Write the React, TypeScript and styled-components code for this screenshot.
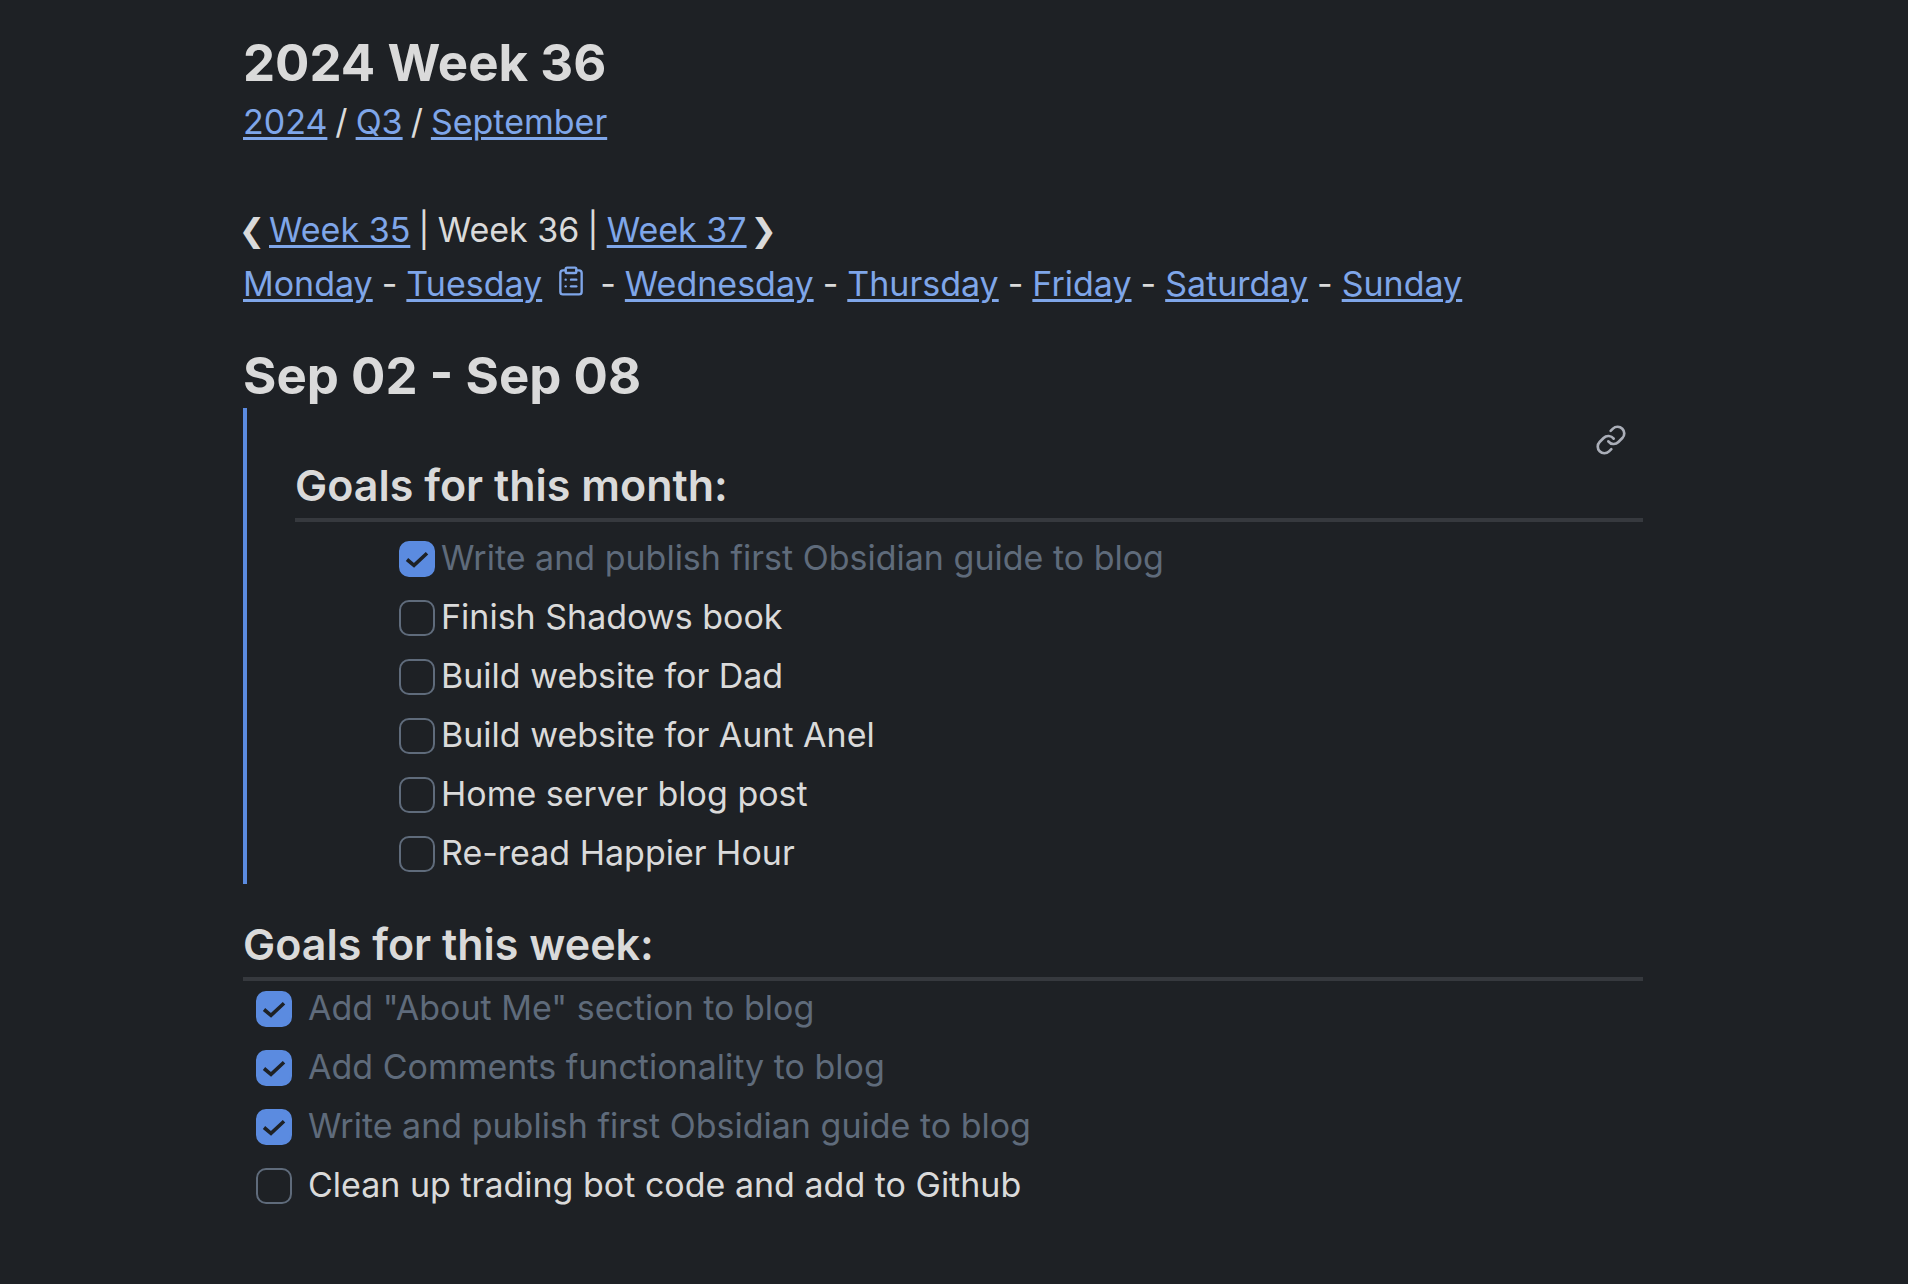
import { Fragment, useState } from "react";
import styled, { createGlobalStyle } from "styled-components";
import { ClipboardList, Link as LinkIcon } from "lucide-react";

const color = {
  page: "#1e2125",
  text: "#dadada",
  link: "#7fa6e9",
  accent: "#5b8be0",
  faint: "#5f6b7b",
  rule: "#36393e",
  icon: "#aaaeb8",
};

const GlobalStyle = createGlobalStyle`
  * { box-sizing: border-box; }
  body {
    margin: 0;
    background: ${color.page};
    color: ${color.text};
    font-family: Inter, "Liberation Sans", sans-serif;
    font-size: 34px;
    line-height: 54px;
  }
`;

const Note = styled.main`
  padding: 31px 265px 56px 243px;
`;

const Title = styled.h1`
  margin: 0;
  font-size: 51px;
  font-weight: 700;
  line-height: 64px;
`;

const RangeTitle = styled(Title)`
  margin-top: 33px;
`;

const Line = styled.nav<{ $gap: number }>`
  display: flex;
  flex-wrap: wrap;
  column-gap: ${(p) => p.$gap}px;
`;

const Breadcrumb = styled(Line)`
  margin-bottom: 54px;
`;

const NoteLink = styled.a`
  color: ${color.link};
  text-decoration: underline;
  text-decoration-thickness: 3px;
  text-underline-offset: 3px;
`;

const Arrow = styled.span`
  display: flex;
  align-items: center;
  justify-content: center;
  width: 18px;
  font-family: "DejaVu Sans", sans-serif;
  font-size: 32px;
  font-weight: 700;
  line-height: 1;
`;

const TaskMarker = styled.span`
  display: flex;
  align-self: center;
  margin: 0 4px;
  padding-bottom: 6px;
  color: ${color.link};
`;

const Embed = styled.section`
  position: relative;
  padding: 48px 0 4px 48px;
  border-left: 4px solid ${color.accent};
`;

const EmbedButton = styled.button`
  position: absolute;
  top: 16px;
  right: 16px;
  display: flex;
  padding: 0;
  border: 0;
  background: none;
  color: ${color.icon};
  cursor: pointer;
`;

const Section = styled.section`
  margin-top: 31px;
`;

const Heading = styled.h2`
  margin: 0;
  padding-bottom: 4px;
  border-bottom: 4px solid ${color.rule};
  font-size: 43px;
  font-weight: 600;
  line-height: 58px;
`;

const List = styled.ul<{ $embedded?: boolean }>`
  display: grid;
  gap: 5px;
  margin: 0;
  padding: ${(p) => (p.$embedded ? "9px 0 0 104px" : "0 0 0 13px")};
  list-style: none;
`;

const Item = styled.li<{ $embedded?: boolean }>`
  display: flex;
  align-items: center;
  gap: ${(p) => (p.$embedded ? "6px" : "16px")};
`;

const Box = styled.span`
  display: grid;
  place-items: center;
  margin-top: 2px;

  > * { grid-area: 1 / 1; }
`;

const Check = styled.input`
  appearance: none;
  width: 36px;
  height: 36px;
  margin: 0;
  border: 2px solid ${color.faint};
  border-radius: 10px;
  cursor: pointer;

  &:checked {
    border-color: ${color.accent};
    background: ${color.accent};
  }
`;

const Tick = styled.svg`
  pointer-events: none;
`;

const Label = styled.label<{ $done: boolean }>`
  color: ${(p) => (p.$done ? color.faint : color.text)};
`;

type Task = { text: string; done: boolean };

const monthTasks: Task[] = [
  { text: "Write and publish first Obsidian guide to blog", done: true },
  { text: "Finish Shadows book", done: false },
  { text: "Build website for Dad", done: false },
  { text: "Build website for Aunt Anel", done: false },
  { text: "Home server blog post", done: false },
  { text: "Re-read Happier Hour", done: false },
];

const weekTasks: Task[] = [
  { text: 'Add "About Me" section to blog', done: true },
  { text: "Add Comments functionality to blog", done: true },
  { text: "Write and publish first Obsidian guide to blog", done: true },
  { text: "Clean up trading bot code and add to Github", done: false },
];

const days = ["Monday", "Tuesday", "Wednesday", "Thursday", "Friday", "Saturday", "Sunday"];

function TaskList({ name, tasks, embedded }: { name: string; tasks: Task[]; embedded?: boolean }) {
  const [done, setDone] = useState(tasks.map((t) => t.done));
  const toggle = (i: number) => setDone(done.map((d, j) => (j === i ? !d : d)));
  return (
    <List $embedded={embedded}>
      {tasks.map((task, i) => (
        <Item key={task.text} $embedded={embedded}>
          <Box>
            <Check id={`${name}-${i}`} type="checkbox" checked={done[i]} onChange={() => toggle(i)} />
            {done[i] && (
              <Tick width="36" height="36" viewBox="0 0 36 36" fill="none" aria-hidden="true">
                <path d="M8 18.5 L15 24.3 L28 12.3" stroke={color.page} strokeWidth="3.6" />
              </Tick>
            )}
          </Box>
          <Label htmlFor={`${name}-${i}`} $done={done[i]}>
            {task.text}
          </Label>
        </Item>
      ))}
    </List>
  );
}

export default function App() {
  return (
    <>
      <GlobalStyle />
      <Note>
        <Title>2024 Week 36</Title>
        <Breadcrumb $gap={8} aria-label="Period">
          <NoteLink href="#2024">2024</NoteLink>
          <span>/</span>
          <NoteLink href="#q3">Q3</NoteLink>
          <span>/</span>
          <NoteLink href="#september">September</NoteLink>
        </Breadcrumb>
        <Line $gap={8} aria-label="Weeks">
          <Arrow>❮</Arrow>
          <NoteLink href="#week-35">Week 35</NoteLink>
          <span>|</span>
          <span>Week 36</span>
          <span>|</span>
          <NoteLink href="#week-37">Week 37</NoteLink>
          <Arrow>❯</Arrow>
        </Line>
        <Line $gap={9} aria-label="Days">
          {days.map((day, i) => (
            <Fragment key={day}>
              {i > 0 && <span>-</span>}
              <NoteLink href={`#${day.toLowerCase()}`}>{day}</NoteLink>
              {day === "Tuesday" && (
                <TaskMarker>
                  <ClipboardList size={32} strokeWidth={1.75} />
                </TaskMarker>
              )}
            </Fragment>
          ))}
        </Line>
        <RangeTitle>Sep 02 - Sep 08</RangeTitle>
        <Embed>
          <EmbedButton type="button" aria-label="Open link">
            <LinkIcon size={32} strokeWidth={2} />
          </EmbedButton>
          <Heading>Goals for this month:</Heading>
          <TaskList name="month" tasks={monthTasks} embedded />
        </Embed>
        <Section>
          <Heading>Goals for this week:</Heading>
          <TaskList name="week" tasks={weekTasks} />
        </Section>
      </Note>
    </>
  );
}
